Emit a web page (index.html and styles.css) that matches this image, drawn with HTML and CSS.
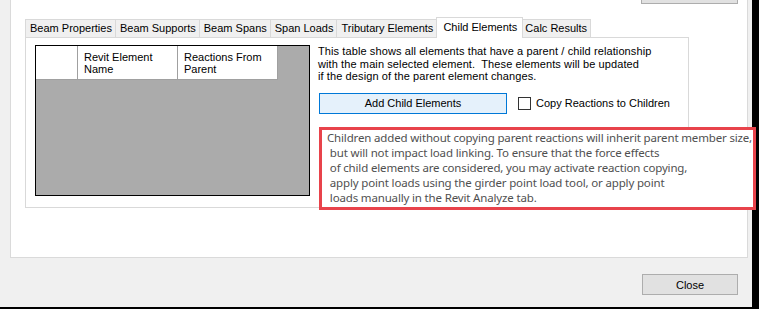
FILE: index.html
```html
<!DOCTYPE html>
<html lang="en">
<head>
    <meta charset="UTF-8">
    <title>Child Elements</title>
    <link rel="stylesheet" href="styles.css">
</head>
<body>
    <div class="window">
        <div class="main">
            <div class="panel">
                <div class="top-row"><div class="stub-button"></div></div>
                <div class="tabs">
                    <div class="tab">Beam Properties</div>
                    <div class="tab">Beam Supports</div>
                    <div class="tab">Beam Spans</div>
                    <div class="tab">Span Loads</div>
                    <div class="tab">Tributary Elements</div>
                    <div class="tab tab-active">Child Elements</div>
                    <div class="tab">Calc Results</div>
                </div>
                <div class="tab-page">
                    <div class="grid">
                        <div class="grid-header">
                            <div class="cell cell-row"></div>
                            <div class="cell">Revit Element<br>Name</div>
                            <div class="cell">Reactions From<br>Parent</div>
                        </div>
                    </div>
                    <div class="side">
                        <p class="info">This table shows all elements that have a parent / child relationship<br>with the main selected element.&nbsp; These elements will be updated<br>if the design of the parent element changes.</p>
                        <div class="actions">
                            <button class="btn-add">Add Child Elements</button>
                            <label class="check"><span class="check-box"></span>Copy Reactions to Children</label>
                        </div>
                    </div>
                </div>
            </div>
            <div class="footer">
                <button class="btn-close">Close</button>
            </div>
            <div class="taskbar"></div>
        </div>
        <div class="edge"></div>

        <div class="note">Children added without copying parent reactions will inherit parent member size,
 but will not impact load linking. To ensure that the force effects
 of child elements are considered, you may activate reaction copying,
 apply point loads using the girder point load tool, or apply point
 loads manually in the Revit Analyze tab.</div>
    </div>
</body>
</html>
```

FILE: styles.css
```css
body {
    margin: 0;
    background-color: #f0f0f0;
    font-family: "Liberation Sans", Arial, sans-serif;
    font-size: 11px;
    color: #000;
    overflow: hidden;
}
.window {
    position: relative;
    display: flex;
    height: 309px;
}
.main {
    width: 752px;
    display: flex;
    flex-direction: column;
}
.edge {
    flex: 1;
    background: #000;
}
.panel {
    box-sizing: border-box;
    margin-left: 10px;
    width: 738px;
    height: 258px;
    background: #fff;
    border: 1px solid #dadada;
    border-top: none;
    padding-left: 14px;
}
.top-row {
    display: flex;
    justify-content: flex-end;
    padding-right: 9px;
}
.stub-button {
    box-sizing: border-box;
    width: 97px;
    height: 4px;
    background: #e1e1e1;
    border: 1px solid #adadad;
    border-top: none;
}
.tabs {
    display: flex;
    align-items: flex-end;
    height: 20px;
    margin-top: 13px;
}
.tab {
    box-sizing: border-box;
    height: 18px;
    line-height: 17px;
    padding: 0 3px 0 4px;
    background: #f0f0f0;
    border: 1px solid #d9d9d9;
    border-bottom: none;
    margin-left: -1px;
    white-space: nowrap;
}
.tab:first-child {
    margin-left: 0;
}
.tab-active {
    position: relative;
    height: 21px;
    line-height: 18px;
    margin: 0 -2px -1px -1px;
    padding: 0 5px 0 6px;
    background: #fff;
}
.tab-page {
    box-sizing: border-box;
    display: flex;
    width: 664px;
    height: 171px;
    border: 1px solid #d9d9d9;
    padding: 7px 0 0 9px;
}
.grid {
    box-sizing: border-box;
    width: 275px;
    height: 151px;
    border: 1px solid #000;
    background: #ababab;
}
.grid-header {
    display: flex;
    height: 34px;
}
.cell {
    box-sizing: border-box;
    width: 100px;
    background: #fff;
    border-right: 1px solid #a0a0a0;
    border-bottom: 1px solid #a0a0a0;
    padding: 5px 0 0 6px;
    line-height: 12px;
}
.cell-row {
    width: 42px;
}
.side {
    margin-left: 8px;
}
.info {
    margin: 0;
    line-height: 12.5px;
    letter-spacing: 0.1px;
}
.actions {
    display: flex;
    align-items: center;
    margin-top: 10px;
}
.btn-add {
    box-sizing: border-box;
    width: 188px;
    height: 21px;
    margin-left: 1px;
    padding: 0;
    background: #e5f1fb;
    border: 1px solid #0078d7;
    font: inherit;
    color: #000;
}
.check {
    display: flex;
    align-items: center;
    margin-left: 11px;
}
.check-box {
    box-sizing: border-box;
    width: 13px;
    height: 13px;
    border: 1px solid #333;
    background: #fff;
    margin-right: 5px;
}
.footer {
    display: flex;
    justify-content: flex-end;
    padding: 16px 14px 0 0;
}
.btn-close {
    box-sizing: border-box;
    width: 96px;
    height: 21px;
    padding: 0;
    background: #e1e1e1;
    border: 1px solid #adadad;
    font: inherit;
    color: #000;
}
.taskbar {
    margin-top: auto;
    height: 2px;
    background: #000;
}
.note {
    position: absolute;
    left: 319px;
    top: 127px;
    box-sizing: border-box;
    width: 437px;
    height: 83px;
    border: 3px solid #e8434b;
    background: #fff;
    padding: 0 0 0 5px;
    font-family: "Noto Sans", "Open Sans", sans-serif;
    font-size: 11.5px;
    letter-spacing: -0.16px;
    line-height: 15px;
    color: #505050;
    white-space: pre;
    overflow: hidden;
}
```
